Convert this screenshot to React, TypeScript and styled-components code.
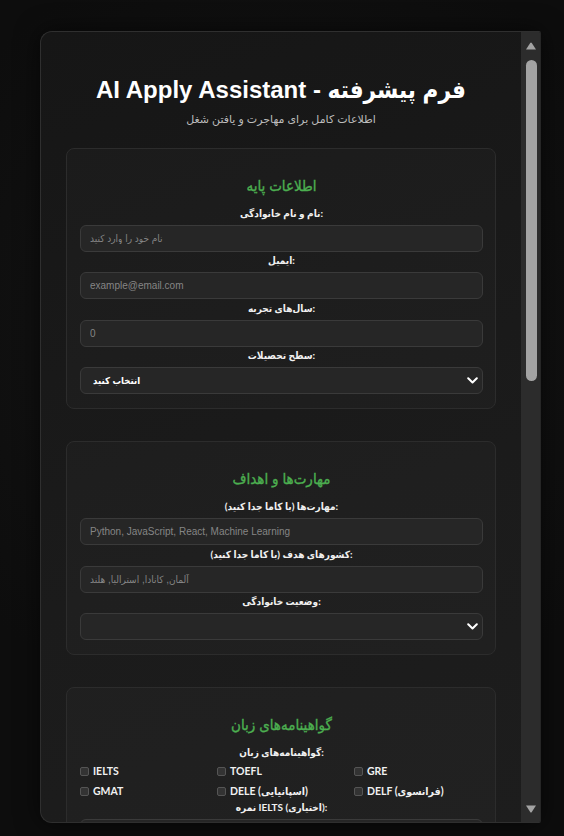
import React from "react";
import styled, { createGlobalStyle } from "styled-components";

const GlobalStyle = createGlobalStyle`
  html, body {
    margin: 0;
    padding: 0;
    background: #0e0e0e;
  }
  body {
    font-family: "Liberation Sans", "DejaVu Sans", sans-serif;
    color: #eee;
  }
`;

const labelFont = `"Lato", "DejaVu Sans Condensed", "DejaVu Sans", sans-serif`;

const Page = styled.div`
  padding: 31px 0 14px 40px;
  min-height: 100vh;
  box-sizing: border-box;
  background: radial-gradient(circle at 50% 40%, #151515 0%, #0d0d0d 70%);
`;

const Panel = styled.div`
  display: flex;
  width: 501px;
  height: 792px;
  box-sizing: border-box;
  overflow: hidden;
  border: 1px solid #2f2f2f;
  border-right-color: #262626;
  border-radius: 12px 2px 2px 12px;
  background: linear-gradient(160deg, #161616 0%, #1b1b1b 60%, #1d1d1d 100%);
  box-shadow: 0 0 24px rgba(0, 0, 0, 0.6);
`;

const Scroller = styled.div`
  flex: 1;
  min-width: 0;
  overflow: hidden;
`;

const Inner = styled.div`
  padding: 44px 25px 30px 25px;
`;

const ScrollTrack = styled.div`
  width: 19px;
  flex: none;
  display: flex;
  flex-direction: column;
  align-items: center;
  padding: 10px 0 9px 1px;
  box-sizing: border-box;
  background: #2c2c2c;
`;

const Thumb = styled.div`
  width: 11px;
  height: 321px;
  margin-top: 9px;
  border-radius: 6px;
  background: #a3a3a3;
`;

const TrackSpacer = styled.div`
  flex: 1;
`;

const Header = styled.header`
  text-align: center;
  margin-bottom: 22px;
`;

const Title = styled.h1`
  margin: 0;
  font-family: "Liberation Sans", "DejaVu Sans Condensed", "DejaVu Sans", sans-serif;
  font-size: 24px;
  line-height: 28px;
  font-weight: bold;
  color: #fff;
`;

const Subtitle = styled.p`
  margin: 8px 0 0;
  font-size: 11px;
  line-height: 14px;
  color: #bdbdbd;
`;

const Card = styled.section`
  background: rgba(255, 255, 255, 0.02);
  border: 1px solid #2c2c2c;
  border-radius: 8px;
  padding: 26px 12px 13px 13px;
  margin-bottom: 32px;
`;

const CardTitle = styled.h3`
  margin: 0 0 11px;
  text-align: center;
  font-family: ${labelFont};
  font-size: 15px;
  line-height: 20px;
  font-weight: normal;
  color: #4caf50;
  -webkit-text-stroke: 0.35px #4caf50;
`;

const Field = styled.div`
  margin-bottom: 1.33px;
`;

const Label = styled.label`
  display: block;
  text-align: center;
  font-family: ${labelFont};
  font-size: 10px;
  line-height: 14px;
  font-weight: bold;
  color: #f0f0f0;
  margin-bottom: 5px;
`;

const Input = styled.input`
  display: block;
  width: 100%;
  height: 27px;
  box-sizing: border-box;
  padding: 0 9px;
  background: #262626;
  border: 1px solid #3a3a3a;
  border-radius: 6px;
  color: #eee;
  font-family: "Liberation Sans", "DejaVu Sans Condensed", "DejaVu Sans", sans-serif;
  font-size: 10px;
  outline: none;

  &::placeholder {
    color: #858585;
  }
`;

const SelectWrap = styled.div`
  position: relative;
`;

const Select = styled.select`
  display: block;
  width: 100%;
  height: 27px;
  box-sizing: border-box;
  padding: 0 24px 0 12px;
  appearance: none;
  background: #262626;
  border: 1px solid #3a3a3a;
  border-radius: 6px;
  color: #fff;
  font-family: "Liberation Sans", "DejaVu Sans Condensed", "DejaVu Sans", sans-serif;
  font-size: 9.5px;
  font-weight: bold;
  outline: none;
`;

const Chevron = styled.svg`
  position: absolute;
  right: 5px;
  top: 50%;
  margin-top: -3px;
  pointer-events: none;
`;

const CheckGrid = styled.div`
  display: grid;
  grid-template-columns: repeat(3, 1fr);
  column-gap: 8px;
  row-gap: 6px;
  margin-bottom: 2px;
`;

const CheckItem = styled.label`
  display: flex;
  align-items: center;
  height: 14px;
  font-family: ${labelFont};
  font-size: 10.5px;
  font-weight: bold;
  color: #f0f0f0;
`;

const Box = styled.input`
  appearance: none;
  width: 9px;
  height: 9px;
  margin: 0 4px 0 0;
  border: 1px solid #555;
  border-radius: 2px;
  background: #333;
  box-sizing: border-box;
`;

const Textarea = styled.textarea`
  display: block;
  width: 100%;
  height: 60px;
  box-sizing: border-box;
  padding: 7px 9px;
  background: #262626;
  border: 1px solid #3a3a3a;
  border-radius: 6px;
  color: #eee;
  font-family: "Liberation Sans", "DejaVu Sans Condensed", "DejaVu Sans", sans-serif;
  font-size: 10px;
  resize: none;

  &::placeholder {
    color: #858585;
  }
`;

const SubmitButton = styled.button`
  display: block;
  width: 100%;
  height: 36px;
  border: none;
  border-radius: 6px;
  background: #4caf50;
  color: #fff;
  font-family: ${labelFont};
  font-size: 13px;
  font-weight: bold;
`;

type FieldProps = {
  label: string;
  children: React.ReactNode;
};

function FormField({ label, children }: FieldProps) {
  return (
    <Field>
      <Label>{label}</Label>
      {children}
    </Field>
  );
}

function Dropdown({ children }: { children: React.ReactNode }) {
  return (
    <SelectWrap>
      <Select defaultValue="">{children}</Select>
      <Chevron width="11" height="7" viewBox="0 0 11 7">
        <path d="M1.2 1.2 L5.5 5.5 L9.8 1.2" fill="none" stroke="#fff" strokeWidth="2" strokeLinecap="round" strokeLinejoin="round" />
      </Chevron>
    </SelectWrap>
  );
}

function Arrow({ down }: { down?: boolean }) {
  return (
    <svg width="12" height="9" viewBox="0 0 12 9">
      <path
        d={down ? "M1 1.5 H11 L6.8 8 Q6 9 5.2 8 Z" : "M1 7.5 H11 L6.8 1 Q6 0 5.2 1 Z"}
        fill="#a3a3a3"
      />
    </svg>
  );
}

const certificates = [
  "IELTS",
  "TOEFL",
  "GRE",
  "GMAT",
  "DELE (اسپانیایی)",
  "DELF (فرانسوی)",
];

export default function App() {
  return (
    <>
      <GlobalStyle />
      <Page>
        <Panel>
          <Scroller>
            <Inner>
              <Header>
                <Title>AI Apply Assistant - فرم پیشرفته</Title>
                <Subtitle>اطلاعات کامل برای مهاجرت و یافتن شغل</Subtitle>
              </Header>

              <Card>
                <CardTitle>اطلاعات پایه</CardTitle>
                <FormField label="نام و نام خانوادگی:">
                  <Input placeholder="نام خود را وارد کنید" />
                </FormField>
                <FormField label="ایمیل:">
                  <Input placeholder="example@email.com" />
                </FormField>
                <FormField label="سال‌های تجربه:">
                  <Input type="number" placeholder="0" />
                </FormField>
                <FormField label="سطح تحصیلات:">
                  <Dropdown>
                    <option value="">انتخاب کنید</option>
                    <option value="diploma">دیپلم</option>
                    <option value="bachelor">کارشناسی</option>
                    <option value="master">کارشناسی ارشد</option>
                    <option value="phd">دکترا</option>
                  </Dropdown>
                </FormField>
              </Card>

              <Card>
                <CardTitle>مهارت‌ها و اهداف</CardTitle>
                <FormField label="مهارت‌ها (با کاما جدا کنید):">
                  <Input placeholder="Python, JavaScript, React, Machine Learning" />
                </FormField>
                <FormField label="کشورهای هدف (با کاما جدا کنید):">
                  <Input placeholder="آلمان, کانادا, استرالیا, هلند" />
                </FormField>
                <FormField label="وضعیت خانوادگی:">
                  <Dropdown>
                    <option value=""></option>
                    <option value="single">مجرد</option>
                    <option value="married">متاهل</option>
                  </Dropdown>
                </FormField>
              </Card>

              <Card>
                <CardTitle>گواهینامه‌های زبان</CardTitle>
                <FormField label="گواهینامه‌های زبان:">
                  <CheckGrid>
                    {certificates.map((c) => (
                      <CheckItem key={c}>
                        <Box type="checkbox" />
                        {c}
                      </CheckItem>
                    ))}
                  </CheckGrid>
                </FormField>
                <FormField label="نمره IELTS (اختیاری):">
                  <Input placeholder="7.5" />
                </FormField>
                <FormField label="نمره TOEFL (اختیاری):">
                  <Input placeholder="100" />
                </FormField>
              </Card>

              <Card>
                <CardTitle>ترجیحات شغلی</CardTitle>
                <FormField label="عنوان شغلی مورد نظر:">
                  <Input placeholder="Software Engineer, Data Scientist" />
                </FormField>
                <FormField label="حداقل حقوق مورد انتظار (یورو):">
                  <Input type="number" placeholder="50000" />
                </FormField>
                <FormField label="نوع قرارداد:">
                  <Dropdown>
                    <option value="">انتخاب کنید</option>
                    <option value="full">تمام وقت</option>
                    <option value="part">پاره وقت</option>
                    <option value="remote">دورکاری</option>
                  </Dropdown>
                </FormField>
              </Card>

              <Card>
                <CardTitle>توضیحات بیشتر</CardTitle>
                <FormField label="درباره خودتان بنویسید:">
                  <Textarea placeholder="سوابق، دستاوردها و اهداف خود را بنویسید" />
                </FormField>
              </Card>

              <SubmitButton>ذخیره اطلاعات</SubmitButton>
            </Inner>
          </Scroller>
          <ScrollTrack>
            <Arrow />
            <Thumb />
            <TrackSpacer />
            <Arrow down />
          </ScrollTrack>
        </Panel>
      </Page>
    </>
  );
}
